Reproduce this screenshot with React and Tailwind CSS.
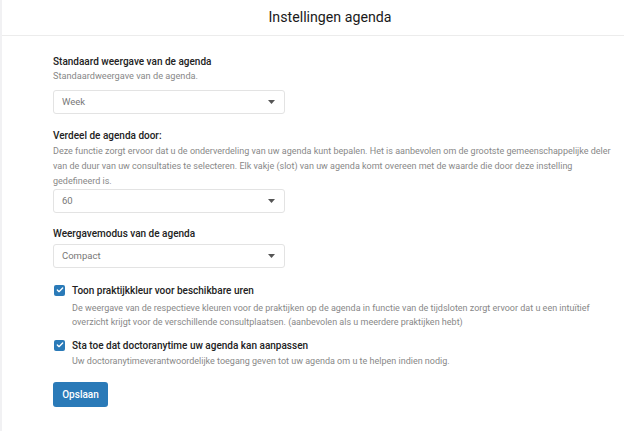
import { Check } from 'lucide-react'

function Select({ value, className }) {
  return (
    <div className={`flex h-[24px] w-[232px] items-center justify-between rounded-[3px] border border-[#e3e3e3] bg-white pl-[8px] pr-[9px] text-[9.5px] text-[#777] ${className}`}>
      <span>{value}</span>
      <svg width="7" height="4" viewBox="0 0 7 4">
        <path d="M0 0h7L3.5 4z" fill="#555" />
      </svg>
    </div>
  )
}

function CheckRow({ title, gap, children }) {
  return (
    <div>
      <div className="flex h-[14px] items-center gap-[7px]">
        <div className="ml-[1px] flex h-[11px] w-[11px] items-center justify-center rounded-[2px] bg-[#2a7ab8]">
          <Check className="h-[8px] w-[8px] text-white" strokeWidth={4} />
        </div>
        <span className="text-[10px] font-medium text-[#222]">{title}</span>
      </div>
      <p className={`pl-[19px] text-[9px] leading-[14px] text-[#888] ${gap}`}>{children}</p>
    </div>
  )
}

export default function App() {
  return (
    <div
      className="flex h-[431px] w-[624px] bg-white"
      style={{ fontFamily: 'Roboto, "Liberation Sans", sans-serif' }}
    >
      <div className="w-[2px] bg-[#f1f1f3]" />
      <div className="flex-1">
        <div className="flex h-[36px] items-center justify-center border-b border-[#ececec] pl-[34px]">
          <h1 className="text-[14.2px] text-[#1a1a1a]">Instellingen agenda</h1>
        </div>

        <div className="pl-[51px] pr-[8px] pt-[19px]">
          <div className="text-[10px] leading-[14px] font-medium text-[#222]">Standaard weergave van de agenda</div>
          <p className="text-[9.2px] leading-[14px] text-[#888]">Standaardweergave van de agenda.</p>
          <Select value="Week" className="mt-[7px]" />

          <div className="mt-[15px] text-[10px] leading-[14px] font-medium text-[#222]">Verdeel de agenda door:</div>
          <p className="mt-[1px] text-[9px] leading-[15px] text-[#888]">
            Deze functie zorgt ervoor dat u de onderverdeling van uw agenda kunt bepalen. Het is aanbevolen om de grootste gemeenschappelijke deler van de duur van uw consultaties te selecteren. Elk vakje (slot) van uw agenda komt overeen met de waarde die door deze instelling gedefineerd is.
          </p>
          <Select value="60" className="mt-[0px]" />

          <div className="mt-[14px] text-[10px] leading-[14px] font-medium text-[#222]">Weergavemodus van de agenda</div>
          <Select value="Compact" className="mt-[3px]" />

          <div className="mt-[15px]">
            <CheckRow title="Toon praktijkkleur voor beschikbare uren" gap="mt-[4px]">
              De weergave van de respectieve kleuren voor de praktijken op de agenda in functie van de tijdsloten zorgt ervoor dat u een intuïtief overzicht krijgt voor de verschillende consultplaatsen. (aanbevolen als u meerdere praktijken hebt)
            </CheckRow>
          </div>

          <div className="mt-[9px]">
            <CheckRow title="Sta toe dat doctoranytime uw agenda kan aanpassen" gap="mt-[2px]">
              Uw doctoranytimeverantwoordelijke toegang geven tot uw agenda om u te helpen indien nodig.
            </CheckRow>
          </div>

          <button className="mt-[14px] flex h-[25px] w-[55px] items-center justify-center rounded-[3px] bg-[#2a7ab8] text-[10px] font-medium text-white">
            Opslaan
          </button>
        </div>
      </div>
    </div>
  )
}
